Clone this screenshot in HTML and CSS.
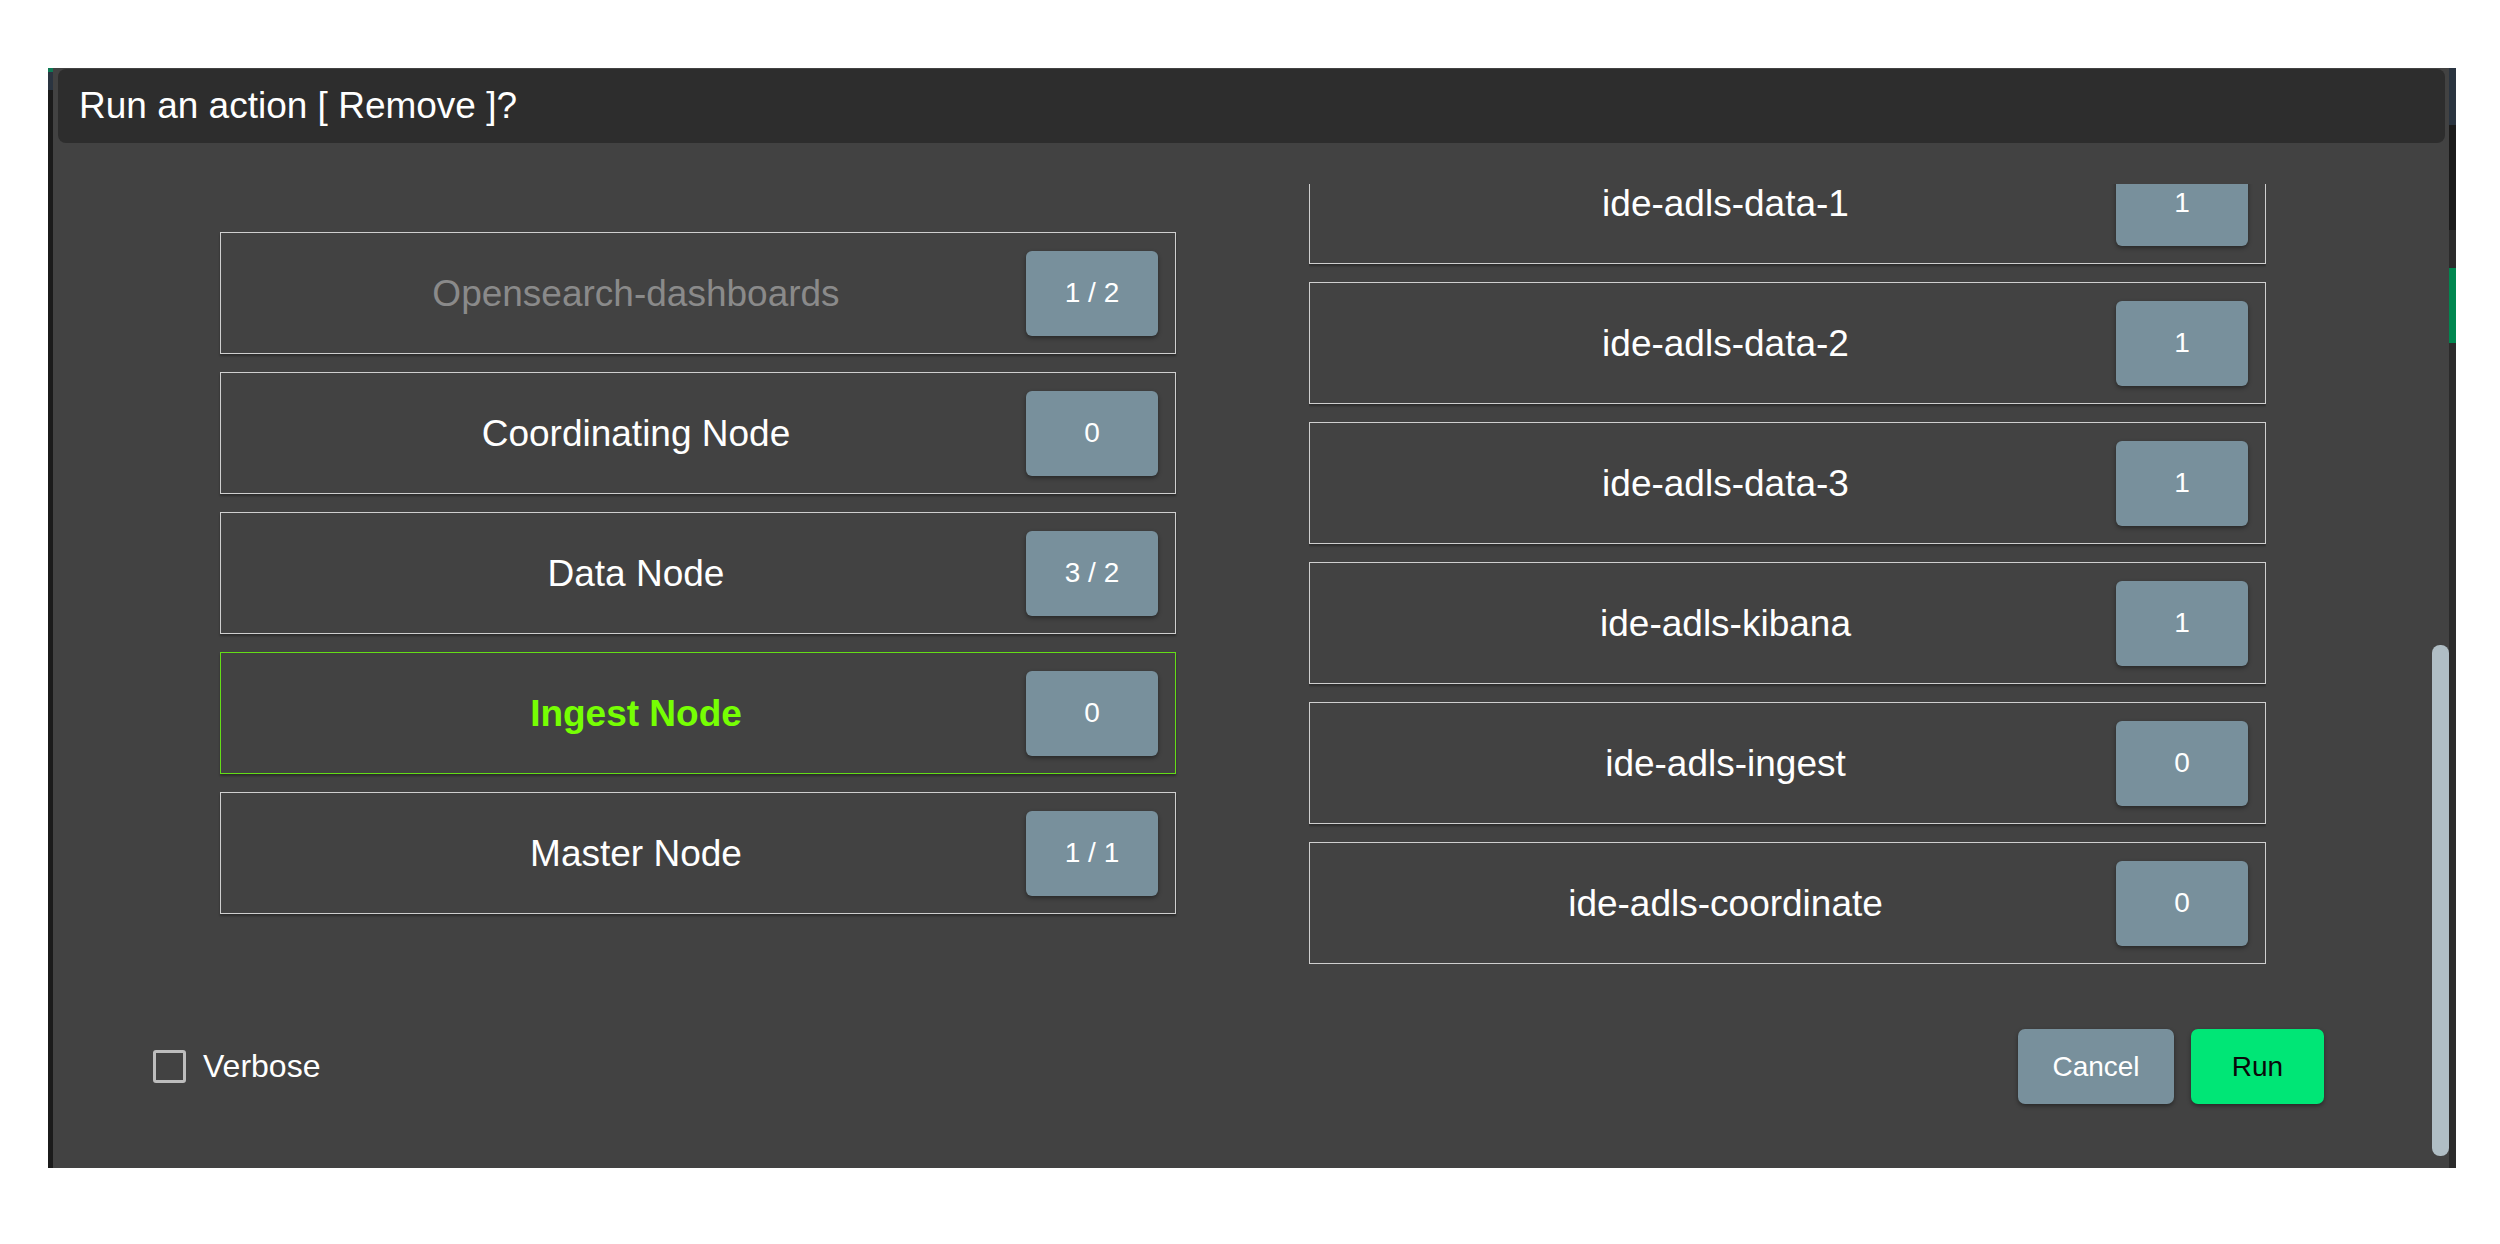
FILE: index.html
```html
<!DOCTYPE html>
<html lang="en">
<head>
<meta charset="utf-8">
<title>Run an action</title>
<link rel="stylesheet" href="styles.css">
</head>
<body>
<div class="screen">
  <div class="modal">
    <div class="modal-header">Run an action [ Remove ]?</div>
    <div class="modal-body">
      <div class="col col-left">
        <div class="node disabled"><span class="label">Opensearch-dashboards</span><span class="badge">1 / 2</span></div>
        <div class="node"><span class="label">Coordinating Node</span><span class="badge">0</span></div>
        <div class="node"><span class="label">Data Node</span><span class="badge">3 / 2</span></div>
        <div class="node selected"><span class="label">Ingest Node</span><span class="badge">0</span></div>
        <div class="node"><span class="label">Master Node</span><span class="badge">1 / 1</span></div>
      </div>
      <div class="col col-right">
        <div class="scroll-list">
          <div class="node"><span class="label">ide-adls-data-1</span><span class="badge">1</span></div>
          <div class="node"><span class="label">ide-adls-data-2</span><span class="badge">1</span></div>
          <div class="node"><span class="label">ide-adls-data-3</span><span class="badge">1</span></div>
          <div class="node"><span class="label">ide-adls-kibana</span><span class="badge">1</span></div>
          <div class="node"><span class="label">ide-adls-ingest</span><span class="badge">0</span></div>
          <div class="node"><span class="label">ide-adls-coordinate</span><span class="badge">0</span></div>
        </div>
      </div>
    </div>
    <div class="modal-footer">
      <label class="verbose"><span class="checkbox"></span><span>Verbose</span></label>
      <div class="actions">
        <button class="btn btn-cancel">Cancel</button>
        <button class="btn btn-run">Run</button>
      </div>
    </div>
    <div class="scroll-thumb"></div>
  </div>
</div>
</body>
</html>
```
FILE: styles.css
```css
html, body {
  margin: 0;
  padding: 0;
  background: #ffffff;
}
body {
  font-family: "Liberation Sans", Arial, Helvetica, sans-serif;
  width: 2500px;
  height: 1244px;
  overflow: hidden;
}
.screen {
  margin: 68px 0 0 48px;
  width: 2408px;
  height: 1100px;
  box-sizing: border-box;
  padding: 0 7px 0 5px;
  background-color: #1b1b1b;
  background-image:
    linear-gradient(to bottom, #2a3440 0, #2a3440 57px, #1b1b1b 57px, #1b1b1b 162px, #2b2b2b 162px, #2b2b2b 200px, #00874f 200px, #00874f 275px, #2b2b2b 275px, #2b2b2b 100%),
    linear-gradient(to bottom, #0f7a55 0, #0f7a55 4px, #2a3440 4px, #2a3440 22px, #1b1b1b 22px, #1b1b1b 100%);
  background-repeat: no-repeat;
  background-size: 7px 100%, 5px 100%;
  background-position: right top, left top;
}
.modal {
  position: relative;
  height: 100%;
  background: #424242;
  display: flex;
  flex-direction: column;
}
.modal-header {
  margin: 1px 4px 0 5px;
  height: 74px;
  background: #2d2d2d;
  border-radius: 8px;
  display: flex;
  align-items: center;
  padding-left: 21px;
  color: #ffffff;
  font-size: 37px;
}
.modal-body {
  flex: 1;
  display: flex;
  align-items: flex-start;
  padding-top: 41px;
  min-height: 0;
}
.col {
  display: flex;
  flex-direction: column;
}
.col-left {
  margin-left: 167px;
  margin-top: 48px;
  width: 956px;
  gap: 18px;
}
.col-right {
  margin-left: 133px;
  width: 957px;
  overflow: hidden;
}
.scroll-list {
  display: flex;
  flex-direction: column;
  gap: 18px;
  margin-top: -42px;
}
.node {
  box-sizing: border-box;
  height: 122px;
  border: 1px solid #cfcfcf;
  box-shadow: 0 2px 2px rgba(0, 0, 0, 0.35);
  display: flex;
  align-items: center;
  padding: 0 17px;
  color: #ffffff;
  font-size: 37px;
}
.node .label {
  flex: 1;
  text-align: center;
  padding-left: 8px;
  line-height: 1;
}
.node.disabled .label {
  color: #8a8a8a;
}
.node.selected {
  border-color: #64dd17;
}
.node.selected .label {
  color: #76ff03;
  font-weight: bold;
}
.badge {
  width: 132px;
  height: 85px;
  border-radius: 6px;
  background: #78909c;
  box-shadow: 0 2px 4px rgba(0, 0, 0, 0.4);
  display: flex;
  align-items: center;
  justify-content: center;
  color: #ffffff;
  font-size: 28px;
}
.modal-footer {
  display: flex;
  align-items: center;
  justify-content: space-between;
  padding: 0 125px 64px 100px;
}
.verbose {
  display: flex;
  align-items: center;
  gap: 17px;
  color: #ffffff;
  font-size: 32px;
}
.checkbox {
  box-sizing: border-box;
  width: 33px;
  height: 33px;
  border: 3px solid #bdbdbd;
  border-radius: 3px;
}
.actions {
  display: flex;
  gap: 17px;
}
.btn {
  height: 75px;
  border: none;
  border-radius: 7px;
  font-family: "Liberation Sans", Arial, Helvetica, sans-serif;
  font-size: 28px;
  box-shadow: 0 2px 4px rgba(0, 0, 0, 0.4);
  padding: 0;
}
.btn-cancel {
  width: 156px;
  background: #78909c;
  color: #ffffff;
}
.btn-run {
  width: 133px;
  background: #00e676;
  color: #0a0a0a;
}
.scroll-thumb {
  position: absolute;
  right: 0;
  top: 577px;
  width: 17px;
  height: 511px;
  border-radius: 8px;
  background: #b0bec5;
}
```
